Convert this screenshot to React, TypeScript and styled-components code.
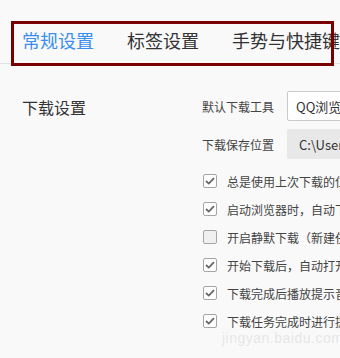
import React from 'react'
import styled, { createGlobalStyle } from 'styled-components'

const GlobalStyle = createGlobalStyle`
  html, body {
    margin: 0;
    padding: 0;
    background: #f9f9f9;
  }
  body {
    font-family: "Noto Sans CJK SC", "Liberation Sans", sans-serif;
    color: #333;
  }
`

const Page = styled.div`
  position: relative;
  width: 340px;
  height: 358px;
  overflow: hidden;
  background: #f9f9f9;
`

const TabBar = styled.div`
  display: flex;
  gap: 33px;
  height: 64px;
  padding: 16px 0 0 22px;
  align-items: center;
  box-sizing: border-box;
  border-bottom: 1px solid #e3e3e3;
  white-space: nowrap;
`

const Tab = styled.div<{ $active?: boolean }>`
  font-size: 18px;
  line-height: 20px;
  color: ${({ $active }) => ($active ? '#3a8ef0' : '#333')};
`

const Highlight = styled.div`
  position: absolute;
  left: 11px;
  top: 21px;
  width: 323px;
  height: 45px;
  box-sizing: border-box;
  border: 3px solid #7a0000;
  pointer-events: none;
`

const Section = styled.div`
  display: flex;
  padding: 27px 0 0 22px;
`

const SectionTitle = styled.div`
  width: 180px;
  flex-shrink: 0;
  font-size: 16px;
  line-height: 18px;
  padding-top: 7px;
  color: #333;
`

const Options = styled.div`
  flex: 1;
  overflow: hidden;
  white-space: nowrap;
`

const FieldRow = styled.div`
  display: flex;
  align-items: center;
  height: 30px;
  margin-bottom: 8px;
`

const FieldLabel = styled.div`
  width: 85px;
  flex-shrink: 0;
  font-size: 12px;
  color: #444;
`

const Field = styled.div<{ $disabled?: boolean }>`
  width: 200px;
  height: 30px;
  flex-shrink: 0;
  box-sizing: border-box;
  display: flex;
  align-items: center;
  padding-left: ${({ $disabled }) => ($disabled ? '11px' : '8px')};
  font-size: 13px;
  color: #333;
  border-radius: 2px;
  background: ${({ $disabled }) => ($disabled ? '#e8e8e8' : '#fff')};
  border: 1px solid ${({ $disabled }) => ($disabled ? '#e8e8e8' : '#c9c9c9')};
`

const CheckList = styled.div`
  padding-top: 7px;
`

const CheckRow = styled.label`
  display: flex;
  align-items: center;
  height: 14px;
  margin-bottom: 14px;
  font-size: 12px;
  color: #444;
`

const Box = styled.span<{ $checked?: boolean }>`
  width: 14px;
  height: 14px;
  box-sizing: border-box;
  margin-left: 1px;
  margin-right: 10px;
  flex-shrink: 0;
  border: 1px solid #a5a5a5;
  border-radius: 2px;
  background: ${({ $checked }) => ($checked ? '#fff' : '#f0f0f0')};
  display: flex;
  align-items: center;
  justify-content: center;
`

const Watermark = styled.div`
  position: absolute;
  left: 222px;
  top: 330px;
  font-family: "Liberation Sans", sans-serif;
  font-size: 14px;
  color: rgba(200, 200, 200, 0.4);
  letter-spacing: 0.5px;
  pointer-events: none;
`

const Check = () => (
  <svg width="10" height="8" viewBox="0 0 10 8">
    <path d="M1 4 L3.8 6.6 L9 1.2" fill="none" stroke="#666" strokeWidth="1.8" />
  </svg>
)

const options = [
  { text: '总是使用上次下载的位置', checked: true },
  { text: '启动浏览器时，自动下载未完成的任务', checked: true },
  { text: '开启静默下载（新建任务时不弹窗）', checked: false },
  { text: '开始下载后，自动打开下载管理器', checked: true },
  { text: '下载完成后播放提示音', checked: true },
  { text: '下载任务完成时进行提醒', checked: true },
]

export default function App() {
  return (
    <Page>
      <GlobalStyle />
      <TabBar>
        <Tab $active>常规设置</Tab>
        <Tab>标签设置</Tab>
        <Tab>手势与快捷键</Tab>
      </TabBar>
      <Highlight />
      <Section>
        <SectionTitle>下载设置</SectionTitle>
        <Options>
          <FieldRow>
            <FieldLabel>默认下载工具</FieldLabel>
            <Field>QQ浏览器</Field>
          </FieldRow>
          <FieldRow>
            <FieldLabel>下载保存位置</FieldLabel>
            <Field $disabled>C:\Users\Administrator\Downloads</Field>
          </FieldRow>
          <CheckList>
            {options.map((o) => (
              <CheckRow key={o.text}>
                <Box $checked={o.checked}>{o.checked && <Check />}</Box>
                {o.text}
              </CheckRow>
            ))}
          </CheckList>
        </Options>
      </Section>
      <Watermark>jingyan.baidu.com</Watermark>
    </Page>
  )
}
